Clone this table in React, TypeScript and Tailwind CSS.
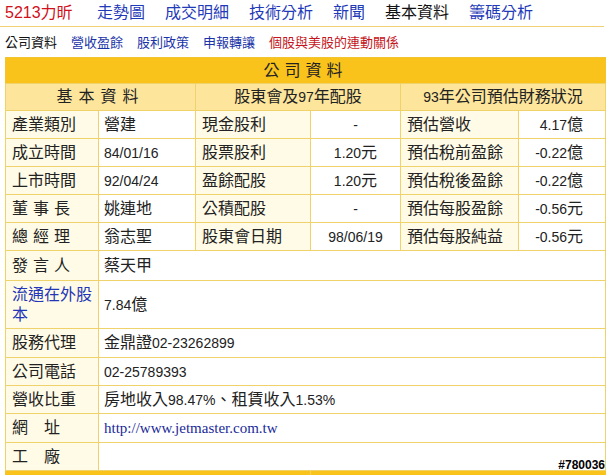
import React from 'react';

type Row = [string, string, string, string, string, string];

const topLinks = [
  { label: '5213力昕', color: 'text-[#d0101a]' },
  { label: '走勢圖', color: 'text-[#1f3bb8]' },
  { label: '成交明細', color: 'text-[#1f3bb8]' },
  { label: '技術分析', color: 'text-[#1f3bb8]' },
  { label: '新聞', color: 'text-[#1f3bb8]' },
  { label: '基本資料', color: 'text-[#111]' },
  { label: '籌碼分析', color: 'text-[#1f3bb8]' },
];

const subLinks = [
  { label: '公司資料', color: 'text-[#111]' },
  { label: '營收盈餘', color: 'text-[#1a33a8]' },
  { label: '股利政策', color: 'text-[#1a33a8]' },
  { label: '申報轉讓', color: 'text-[#1a33a8]' },
  { label: '個股與美股的連動關係', color: 'text-[#c4141c]' },
];

const rows: Row[] = [
  ['產業類別', '營建', '現金股利', '-', '預估營收', '4.17億'],
  ['成立時間', '84/01/16', '股票股利', '1.20元', '預估稅前盈餘', '-0.22億'],
  ['上市時間', '92/04/24', '盈餘配股', '1.20元', '預估稅後盈餘', '-0.22億'],
  ['董事長', '姚連地', '公積配股', '-', '預估每股盈餘', '-0.56元'],
  ['總經理', '翁志聖', '股東會日期', '98/06/19', '預估每股純益', '-0.56元'],
];

const spaced = ['董事長', '總經理', '發言人'];

const cell = 'border border-[#efd36a] p-0';
const labelCell = `${cell} bg-[#fffbe6] pl-[6px] text-left`;
const valueCell = `${cell} bg-white`;

// latin digits in the original render noticeably narrower than the CJK text
const Txt: React.FC<{ s: string }> = ({ s }) => (
  <>
    {s.split(/([!-~]+)/).map((part, i) =>
      /^[!-~]+$/.test(part) ? (
        <span key={i} className="text-[14px]">{part}</span>
      ) : (
        <React.Fragment key={i}>{part}</React.Fragment>
      )
    )}
  </>
);

const App: React.FC = () => {
  return (
    <div className="relative h-[475px] w-[611px] overflow-hidden bg-white font-['Liberation_Sans','Noto_Sans_CJK_TC',sans-serif] text-[#222]">
      {/* top nav */}
      <div className="flex h-[26px] items-center gap-[20px] pl-[5px] text-[16px] leading-none">
        {topLinks.map((l, i) => (
          <span key={l.label} className={`${l.color} ${i === 0 ? 'w-[72px]' : ''}`}>{l.label}</span>
        ))}
      </div>
      <div className="h-px w-[604px] bg-[#f0d070]"></div>
      <div className="flex h-[30px] items-center gap-[14px] pl-[5px] text-[13px] leading-none">
        {subLinks.map(l => (
          <span key={l.label} className={l.color}>{l.label}</span>
        ))}
      </div>

      <table className="ml-[5px] w-[600px] table-fixed border-collapse border border-[#f2c530] text-[16px] leading-tight">
        <colgroup>
          <col className="w-[93px]" />
          <col className="w-[97px]" />
          <col className="w-[115px]" />
          <col className="w-[90px]" />
          <col className="w-[118px]" />
          <col className="w-[87px]" />
        </colgroup>
        <tbody>
          <tr className="h-[26px] bg-[#f9c31b]">
            <td colSpan={6} className="p-0 text-center tracking-[5px]">公司資料</td>
          </tr>
          <tr className="h-[27px] bg-[#fde59c]">
            <td colSpan={2} className={`${cell} text-center tracking-[6px]`}>基本資料</td>
            <td colSpan={2} className={`${cell} text-center`}><Txt s="股東會及97年配股" /></td>
            <td colSpan={2} className={`${cell} text-center`}><Txt s="93年公司預估財務狀況" /></td>
          </tr>
          {rows.map(r => (
            <tr key={r[0]} className="h-[28px]">
              <td className={`${labelCell} ${spaced.includes(r[0]) ? 'tracking-[5px]' : ''}`}>{r[0]}</td>
              <td className={`${valueCell} pl-[5px] text-left`}><Txt s={r[1]} /></td>
              <td className={labelCell}>{r[2]}</td>
              <td className={`${valueCell} text-center`}><Txt s={r[3]} /></td>
              <td className={labelCell}>{r[4]}</td>
              <td className={`${valueCell} pr-[22px] text-right`}><Txt s={r[5]} /></td>
            </tr>
          ))}
          <tr className="h-[30px]">
            <td className={`${labelCell} tracking-[5px]`}>發言人</td>
            <td colSpan={5} className={`${valueCell} pl-[5px]`}>蔡天甲</td>
          </tr>
          <tr className="h-[48px]">
            <td className={`${labelCell} text-[#2436b8]`}>流通在外股本</td>
            <td colSpan={5} className={`${valueCell} pl-[5px]`}><Txt s="7.84億" /></td>
          </tr>
          <tr className="h-[29px]">
            <td className={labelCell}>股務代理</td>
            <td colSpan={5} className={`${valueCell} pl-[5px]`}><Txt s="金鼎證02-23262899" /></td>
          </tr>
          <tr className="h-[28px]">
            <td className={labelCell}>公司電話</td>
            <td colSpan={5} className={`${valueCell} pl-[5px]`}><Txt s="02-25789393" /></td>
          </tr>
          <tr className="h-[28px]">
            <td className={labelCell}>營收比重</td>
            <td colSpan={5} className={`${valueCell} pl-[5px]`}><Txt s="房地收入98.47%、租賃收入1.53%" /></td>
          </tr>
          <tr className="h-[29px]">
            <td className={labelCell}>網　址</td>
            <td colSpan={5} className={`${valueCell} pl-[5px]`}>
              <a className="font-['Liberation_Serif',serif] text-[15px] text-[#1a2a99]">http://www.jetmaster.com.tw</a>
            </td>
          </tr>
          <tr className="h-[28px]">
            <td className={labelCell}>工　廠</td>
            <td colSpan={5} className={valueCell}></td>
          </tr>
          <tr className="h-[28px] bg-[#f9c31b]">
            <td colSpan={3} className="border-r border-[#f7d45a] p-0"></td>
            <td colSpan={3} className="p-0"></td>
          </tr>
        </tbody>
      </table>

      <span className="absolute right-[6px] top-[459px] text-[12px] font-bold leading-none text-black [text-shadow:0_0_2px_#fff,0_0_1px_#fff]">
        #780036
      </span>
    </div>
  );
};

export default App;
